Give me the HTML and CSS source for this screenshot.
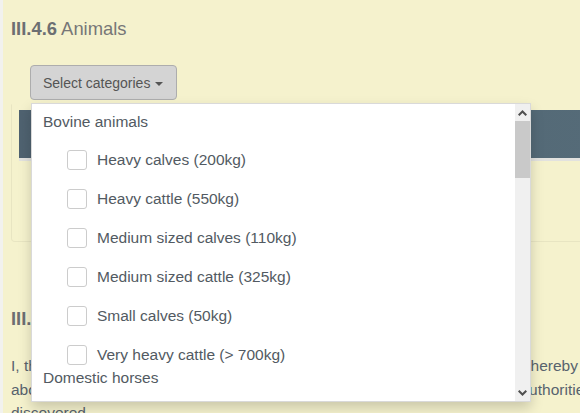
FILE: index.html
```html
<!DOCTYPE html>
<html lang="en">
<head>
  <meta charset="UTF-8">
  <title>III.4.6 Animals</title>
  <link rel="stylesheet" href="styles.css">
</head>
<body>
  <div class="page">
    <h4 class="section-title"><b>III.4.6</b> Animals</h4>

    <div class="picker">
      <button class="btn-select">Select categories <span class="caret"></span></button>

      <!-- open category menu -->
      <div class="dropdown-menu">
        <div class="menu-list">
          <div class="group-title">Bovine animals</div>
          <div class="options">
            <label class="option"><span class="check"></span>Heavy calves (200kg)</label>
            <label class="option"><span class="check"></span>Heavy cattle (550kg)</label>
            <label class="option"><span class="check"></span>Medium sized calves (110kg)</label>
            <label class="option"><span class="check"></span>Medium sized cattle (325kg)</label>
            <label class="option"><span class="check"></span>Small calves (50kg)</label>
            <label class="option"><span class="check"></span>Very heavy cattle (&gt; 700kg)</label>
          </div>
          <div class="group-title">Domestic horses</div>
          <div class="options">
            <label class="option"><span class="check"></span>Horses</label>
            <label class="option"><span class="check"></span>Ponies</label>
          </div>
        </div>
        <div class="scrollbar">
          <div class="scroll-btn">
            <svg width="9" height="6" viewBox="0 0 9 6"><path d="M0.7 5.3 L4.5 1.5 L8.3 5.3" fill="none" stroke="#505050" stroke-width="2"/></svg>
          </div>
          <div class="scroll-track"><div class="scroll-thumb"></div></div>
          <div class="scroll-btn">
            <svg width="9" height="6" viewBox="0 0 9 6"><path d="M0.7 0.7 L4.5 4.5 L8.3 0.7" fill="none" stroke="#505050" stroke-width="2"/></svg>
          </div>
        </div>
      </div>
    </div>

    <div class="card">
      <div class="card-bar"></div>
    </div>

    <h4 class="section-title second"><b>III.</b>5 Declaration</h4>

    <div class="declaration">
      <div class="line"><span>I, the undersigned official veterinarian,</span><span>I hereby</span></div>
      <div class="line"><span>above were examined and</span><span class="clip">authorities</span></div>
      <div class="line"><span>discovered.</span></div>
    </div>
  </div>
</body>
</html>
```

FILE: styles.css
```css
/* page */
html, body {
  margin: 0;
  height: 100%;
  overflow: hidden;
}

body {
  font-family: "Liberation Sans", Arial, sans-serif;
  background: linear-gradient(to right, #f2f2ee 0, #f2f2ee 3px, #f5f2cd 3px);
  color: #555;
}

.page {
  padding: 19px 0 0 11px;
}

/* headings */
.section-title {
  margin: 0;
  font-size: 18.4px;
  line-height: 20px;
  font-weight: normal;
  color: #777;
}

.section-title b {
  color: #6c6f72;
}

.section-title.second {
  margin-top: 67px;
}

/* category picker */
.picker {
  position: relative;
  margin: 26px 0 0 19px;
  height: 35px;
}

.btn-select {
  font-family: inherit;
  font-size: 14px;
  line-height: 19px;
  color: #555;
  background-color: #d4d4d4;
  border: 1px solid #adadad;
  border-radius: 4px;
  padding: 8px 12px 6px 12px;
  height: 35px;
  width: 147px;
  text-align: left;
  cursor: pointer;
}

.caret {
  display: inline-block;
  width: 0;
  height: 0;
  margin-left: 1px;
  vertical-align: middle;
  border-top: 4px solid #555;
  border-left: 4px solid transparent;
  border-right: 4px solid transparent;
}

.dropdown-menu {
  position: absolute;
  top: 38px;
  left: 1px;
  z-index: 10;
  width: 498px;
  height: 297px;
  display: flex;
  background: #fff;
  border: 1px solid rgba(0, 0, 0, 0.15);
  box-shadow: 0 6px 12px rgba(0, 0, 0, 0.175);
}

.menu-list {
  flex: 1;
  overflow: hidden;
  padding-top: 6px;
  font-size: 15.5px;
  line-height: 22px;
  color: #525a62;
}

.group-title {
  padding: 1px 11px 3px 11px;
}

.options {
  display: flex;
  flex-direction: column;
  gap: 17px;
  padding: 13px 0 0 35px;
}

.option {
  display: flex;
  align-items: center;
  gap: 10px;
  height: 22px;
  white-space: nowrap;
}

.check {
  width: 18px;
  height: 18px;
  border: 1px solid #ccc;
  border-radius: 3px;
  background: #fff;
}

/* fake scrollbar */
.scrollbar {
  width: 15px;
  display: flex;
  flex-direction: column;
  background: #f0f0f0;
}

.scroll-btn {
  height: 17px;
  display: flex;
  align-items: center;
  justify-content: center;
}

.scroll-track {
  flex: 1;
}

.scroll-thumb {
  height: 57px;
  background: #c9c9c9;
}

/* card with dark bar */
.card {
  margin-top: 4px;
  width: calc(100% + 20px);
  border: 1px solid rgba(0, 0, 0, 0.05);
  border-top-color: transparent;
  border-radius: 0 0 4px 4px;
  padding: 5px 0 80px 7px;
  box-sizing: border-box;
}

.card-bar {
  height: 48px;
  background: linear-gradient(to right, #4f6270, #556b78);
  border-bottom: 3px solid #e2e2df;
}

/* declaration text */
.declaration {
  margin-top: 25px;
  font-size: 15.5px;
  line-height: 23.5px;
  color: #58636d;
  width: 567px;
}

.line {
  display: flex;
  justify-content: space-between;
  white-space: nowrap;
}

.clip {
  margin-right: -14px;
}
```
